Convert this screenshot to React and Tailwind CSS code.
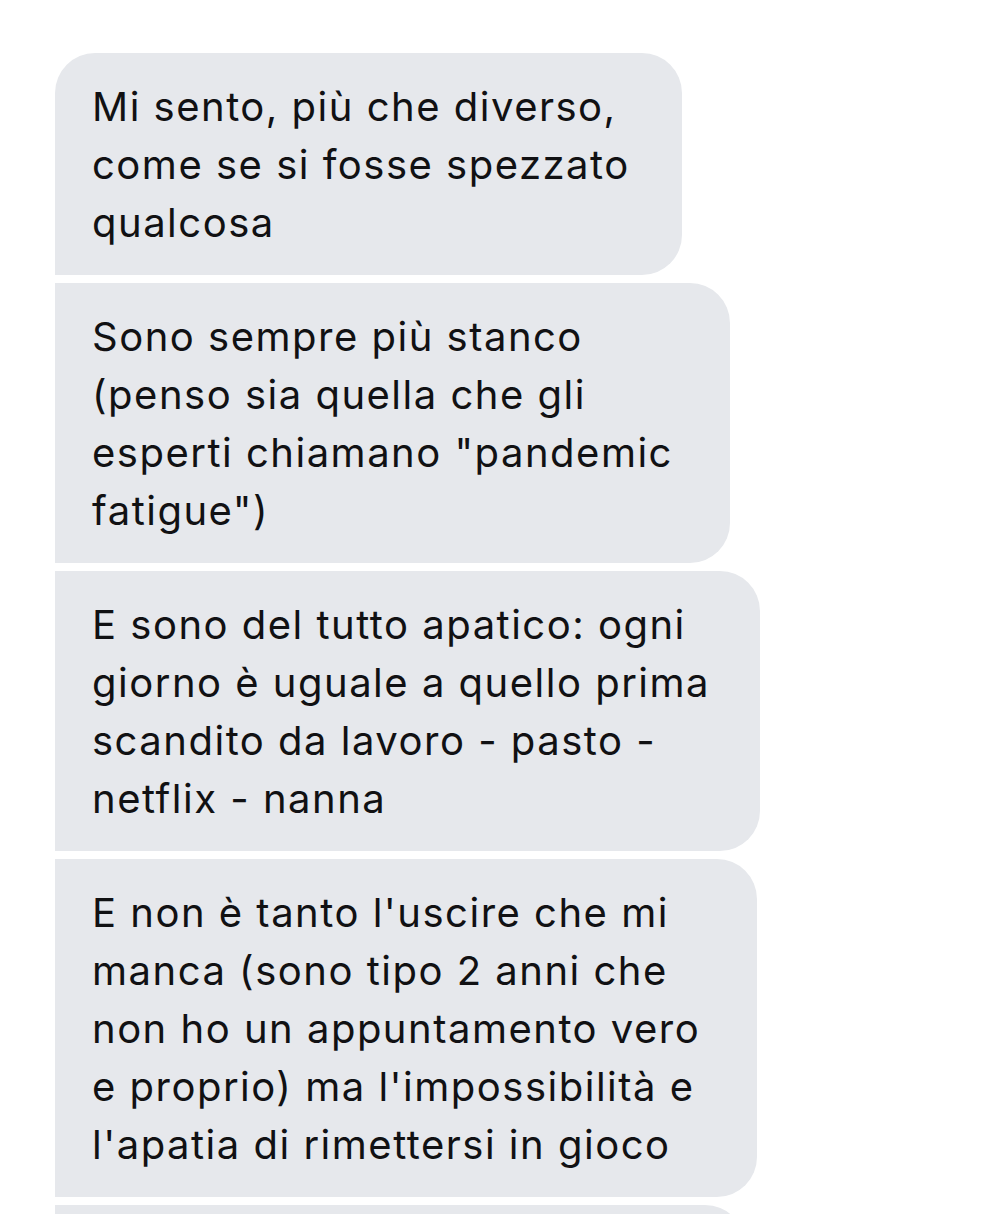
const messages = [
  {
    lines: ['Mi sento, più che diverso,', 'come se si fosse spezzato', 'qualcosa'],
    width: 'w-[627px]',
    corners: 'rounded-[40px] rounded-bl-none',
  },
  {
    lines: ['Sono sempre più stanco', '(penso sia quella che gli', 'esperti chiamano "pandemic', 'fatigue")'],
    width: 'w-[675px]',
    corners: 'rounded-r-[40px]',
  },
  {
    lines: ['E sono del tutto apatico: ogni', 'giorno è uguale a quello prima', 'scandito da lavoro - pasto -', 'netflix - nanna'],
    width: 'w-[705px]',
    corners: 'rounded-r-[40px]',
  },
  {
    lines: [
      "E non è tanto l'uscire che mi",
      'manca (sono tipo 2 anni che',
      'non ho un appuntamento vero',
      "e proprio) ma l'impossibilità e",
      "l'apatia di rimettersi in gioco",
    ],
    width: 'w-[702px]',
    corners: 'rounded-r-[40px]',
  },
  {
    lines: ['', ''],
    width: 'w-[690px]',
    corners: 'rounded-r-[40px]',
  },
]

const Bubble = ({ lines, width, corners }) => (
  <div className={`${width} ${corners} bg-[#e6e8ec] pl-[37px] pr-6 pt-[25px] pb-[23px]`}>
    {lines.map((line, i) => (
      <div key={i} className="whitespace-nowrap h-[58px] leading-[58px]">
        {line}
      </div>
    ))}
  </div>
)

export default function App() {
  return (
    <div
      className="w-[1005px] h-[1214px] overflow-hidden bg-white pt-[53px] pl-[55px] text-[40px] tracking-[1.5px] text-[#111113]"
      style={{ fontFamily: 'Inter, "Noto Sans", sans-serif' }}
    >
      <div className="flex flex-col gap-2">
        {messages.map((m, i) => (
          <Bubble key={i} {...m} />
        ))}
      </div>
    </div>
  )
}
